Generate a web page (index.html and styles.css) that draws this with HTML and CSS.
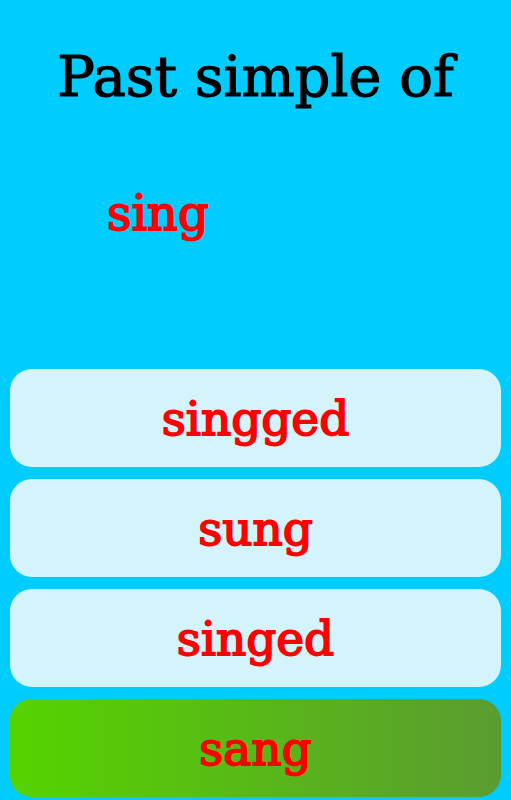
FILE: index.html
```html
<!DOCTYPE html>
<html lang="en">
<head>
    <meta charset="UTF-8">
    <meta name="viewport" content="width=device-width, initial-scale=1.0">
    <title>Past simple quiz</title>
    <link rel="stylesheet" href="styles.css">
</head>
<body>
    <div class="quiz">
        <h1 class="question">Past simple of</h1>
        <div class="verb">sing</div>
        <div class="answers">
            <button class="answer">singged</button>
            <button class="answer">sung</button>
            <button class="answer">singed</button>
            <button class="answer correct">sang</button>
        </div>
    </div>
</body>
</html>
```

FILE: styles.css
```css
html, body {
    margin: 0;
    height: 100%;
}
body {
    background-color: #00ccfd;
    font-family: "DejaVu Serif", "Liberation Serif", serif;
}
.quiz {
    display: flex;
    flex-direction: column;
    height: 100%;
    padding: 0 10px 3px;
    box-sizing: border-box;
}
.question {
    margin: 44px 0 0;
    text-align: center;
    font-size: 56px;
    font-weight: normal;
    color: #000;
    -webkit-text-stroke: 1.2px #000;
}
.verb {
    margin: 76px 0 0 97px;
    font-size: 48px;
    color: #ff0000;
    -webkit-text-stroke: 1.8px #ff0000;
}
.answers {
    margin-top: auto;
    display: flex;
    flex-direction: column;
    gap: 12px;
}
.answer {
    height: 98px;
    border: none;
    border-radius: 22px;
    background-color: #d4f4fc;
    color: #ff0000;
    font-family: inherit;
    font-size: 47px;
    padding: 0;
    -webkit-text-stroke: 1.8px #ff0000;
}
.correct {
    background: linear-gradient(to right, #55d400, #5b9c30);
}
```
